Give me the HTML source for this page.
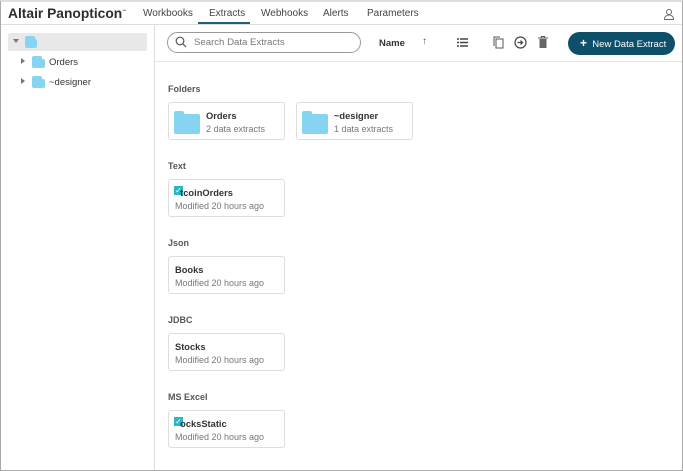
<!DOCTYPE html><html><head><style>
*{box-sizing:border-box;margin:0;padding:0}
body{width:683px;height:471px;overflow:hidden;background:#fff;font-family:"Liberation Sans",sans-serif;position:relative;color:#333}
.frame{position:absolute;left:0;top:0;width:683px;height:471px;border:1px solid #aaa;border-top:2px solid #ddd}
.a{position:absolute}
.logo{left:8px;top:6px;font-size:13.8px;font-weight:bold;color:#2d2d2d}
.tab{top:8px;font-size:10px;color:#444}
.card{position:absolute;left:168px;width:117px;height:38px;border:1px solid #ddd;border-radius:3px;background:#fff}
.card b{position:absolute;left:6px;top:8px;font-size:9.3px;color:#333}
.card span{position:absolute;left:6px;top:21px;font-size:9px;color:#777}
.lbl{left:168px;font-size:9px;font-weight:bold;color:#555}
.fold{position:absolute;width:26px;height:20px;background:#86d3f2;border-radius:2px}
.fold:before{content:"";position:absolute;left:0;top:-3px;width:10px;height:4px;background:#86d3f2;border-radius:2px 2px 0 0}
.chk{position:absolute;left:5px;top:6px;width:9px;height:9px;background:#2bb5c5;color:#fff;font-size:8px;line-height:9px;text-align:center}
</style></head><body>
<div class="a logo">Altair Panopticon<sup style="font-size:4px">™</sup></div>
<div class="a tab" style="left:143px">Workbooks</div>
<div class="a tab" style="left:209px">Extracts</div>
<div class="a tab" style="left:261px">Webhooks</div>
<div class="a tab" style="left:323px">Alerts</div>
<div class="a tab" style="left:367px">Parameters</div>
<div class="a" style="left:198px;top:22px;width:52px;height:2px;background:#1f5f7a"></div>
<svg class="a" style="left:663px;top:8px" width="12" height="12" viewBox="0 0 12 12"><circle cx="6" cy="4" r="2.5" fill="none" stroke="#666"/><path d="M1.5 11.5c0-3 2-4.5 4.5-4.5s4.5 1.5 4.5 4.5z" fill="none" stroke="#666"/></svg>
<div class="a" style="left:0;top:24px;width:683px;height:1px;background:#ddd"></div>
<div class="a" style="left:154px;top:25px;width:1px;height:446px;background:#ddd"></div>
<div class="a" style="left:8px;top:33px;width:139px;height:18px;background:#e8e8e8;border-radius:2px"></div>
<div class="a" style="left:13px;top:39px;border-left:3px solid transparent;border-right:3px solid transparent;border-top:4px solid #777"></div>
<div class="fold" style="left:25px;top:39px;width:12px;height:9px"></div>
<div class="a" style="left:21px;top:58px;border-top:3px solid transparent;border-bottom:3px solid transparent;border-left:4px solid #777"></div>
<div class="fold" style="left:32px;top:59px;width:13px;height:9px"></div>
<div class="a" style="left:49px;top:57px;font-size:9.5px">Orders</div>
<div class="a" style="left:21px;top:78px;border-top:3px solid transparent;border-bottom:3px solid transparent;border-left:4px solid #777"></div>
<div class="fold" style="left:32px;top:79px;width:13px;height:9px"></div>
<div class="a" style="left:49px;top:77px;font-size:9.5px">~designer</div>
<div class="a" style="left:167px;top:32px;width:194px;height:21px;border:1px solid #999;border-radius:11px"></div>
<svg class="a" style="left:175px;top:36px" width="12" height="12" viewBox="0 0 12 12"><circle cx="5" cy="5" r="3.8" fill="none" stroke="#555" stroke-width="1.2"/><path d="M8 8l3 3" stroke="#555" stroke-width="1.2"/></svg>
<div class="a" style="left:194px;top:37px;font-size:9.6px;color:#777">Search Data Extracts</div>
<div class="a" style="left:379px;top:38px;font-size:9.5px;font-weight:bold">Name</div>
<div class="a" style="left:422px;top:36px;font-size:10px;color:#555">↑</div>
<svg class="a" style="left:457px;top:38px" width="11" height="9" viewBox="0 0 11 9"><path d="M0 1h2M3 1h8M0 4.5h2M3 4.5h8M0 8h2M3 8h8" stroke="#444" stroke-width="1.4"/></svg>
<svg class="a" style="left:493px;top:36px" width="11" height="13" viewBox="0 0 11 13"><rect x="3" y="3" width="7" height="9" fill="none" stroke="#555"/><path d="M1 10V1h6" fill="none" stroke="#555"/></svg>
<svg class="a" style="left:514px;top:36px" width="13" height="13" viewBox="0 0 13 13"><circle cx="6.5" cy="6.5" r="5.5" fill="none" stroke="#444" stroke-width="1.2"/><path d="M3.5 6.5h5M6.5 4.5l2 2-2 2" fill="none" stroke="#444" stroke-width="1.2"/></svg>
<svg class="a" style="left:538px;top:36px" width="10" height="12" viewBox="0 0 10 12"><path d="M0 2h10M3.5 2V0.5h3V2" stroke="#555" fill="none"/><rect x="1.5" y="3" width="7" height="9" fill="#666"/></svg>
<div class="a" style="left:568px;top:32px;width:107px;height:23px;background:#0e4f6a;border-radius:12px;color:#fff;font-size:9.5px;line-height:23px;padding-left:12px"><b style="font-size:12px">+</b>&nbsp; New Data Extract</div>
<div class="a" style="left:155px;top:61px;width:528px;height:1px;background:#e3e3e3"></div>
<div class="a lbl" style="top:84px">Folders</div>
<div class="card" style="top:102px"><div class="fold" style="left:5px;top:11px"></div><b style="left:37px">Orders</b><span style="left:37px">2 data extracts</span></div>
<div class="card" style="top:102px;left:296px"><div class="fold" style="left:5px;top:11px"></div><b style="left:37px">~designer</b><span style="left:37px">1 data extracts</span></div>
<div class="a lbl" style="top:161px">Text</div>
<div class="card" style="top:179px"><div class="chk">✓</div><b>&nbsp;&nbsp;tcoinOrders</b><span>Modified 20 hours ago</span></div>
<div class="a lbl" style="top:238px">Json</div>
<div class="card" style="top:256px"><b>Books</b><span>Modified 20 hours ago</span></div>
<div class="a lbl" style="top:315px">JDBC</div>
<div class="card" style="top:333px"><b>Stocks</b><span>Modified 20 hours ago</span></div>
<div class="a lbl" style="top:392px">MS Excel</div>
<div class="card" style="top:410px"><div class="chk">✓</div><b>&nbsp;&nbsp;ocksStatic</b><span>Modified 20 hours ago</span></div>
<div class="frame"></div>
</body></html>
